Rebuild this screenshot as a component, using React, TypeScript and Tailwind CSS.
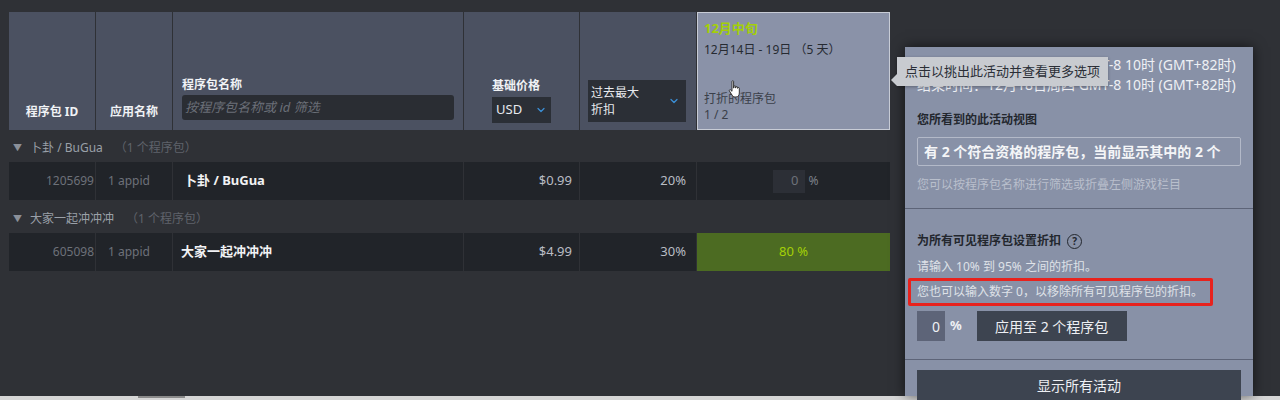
import { ChevronDown } from "lucide-react";

const font = { fontFamily: '"Noto Sans", "Noto Sans CJK SC", sans-serif' };

function GroupRow({ name, h }: { name: string; h: string }) {
  return (
    <div className={`col-span-6 ${h} flex items-center gap-2 pl-[4px] pt-[4px] text-[12px] text-[#9aa0a8]`}>
      <span className="text-[9px] text-[#8b9099]">▼</span>
      <span>{name}</span>
      <span className="text-[#5f636b] ml-1">（1 个程序包）</span>
    </div>
  );
}

export default function App() {
  return (
    <div style={font} className="w-[1280px] h-[400px] bg-[#2f3136] overflow-hidden relative">
      <div className="h-[396px] pt-[12px] pl-[9px]">
        <div className="grid grid-cols-[86px_76px_290px_115px_116px_193px] gap-x-px w-fit">
          {/* header */}
          <div className="h-[118px] bg-[#4b5161] flex items-end justify-center pb-[9px] text-[12px] font-bold text-[#f0f2f5]">程序包 ID</div>
          <div className="h-[118px] bg-[#4b5161] flex items-end justify-center pb-[9px] text-[12px] font-bold text-[#f0f2f5]">应用名称</div>
          <div className="h-[118px] bg-[#4b5161] flex flex-col justify-end px-[9px] pb-[10px]">
            <div className="text-[12px] font-bold text-[#f0f2f5] mb-[1px]">程序包名称</div>
            <div className="h-[25px] rounded-[3px] bg-[#2a2d33] flex items-center px-[3px] text-[13px] italic text-[#6a6f78]">按程序包名称或 id 筛选</div>
          </div>
          <div className="h-[118px] bg-[#4b5161] flex flex-col justify-end pl-[28px] pb-[7px]">
            <div className="text-[12px] font-bold text-[#f0f2f5] mb-[2px]">基础价格</div>
            <div className="w-[59px] h-[26px] bg-[#2b2f36] flex items-center justify-between px-[4px] text-[13px] text-[#e8eaee]">
              USD
              <ChevronDown size={12} strokeWidth={2.5} className="text-[#3b8fd6]" />
            </div>
          </div>
          <div className="h-[118px] bg-[#4b5161] flex items-end pl-[8px] pb-[8px]">
            <div className="w-[98px] h-[42px] bg-[#2b2f36] flex items-center justify-between pl-[3px] pr-[6px] text-[12px] leading-[17px] text-[#e8eaee]">
              <span>过去最大<br />折扣</span>
              <ChevronDown size={12} strokeWidth={2.5} className="text-[#3b8fd6]" />
            </div>
          </div>
          <div className="h-[118px] bg-[#8a92a8] border border-[#c8ccd6] px-[6px] pt-[6px] flex flex-col text-[#2a2e36] relative">
            <div className="text-[13px] font-bold text-[#a4d007]">12月中旬</div>
            <div className="text-[12px] mt-[2px] text-[#262a31]">12月14日 - 19日 （5 天）</div>
            <div className="mt-auto pb-[6px] text-[12px] leading-[16px] text-[#3a3f49]">
              打折的程序包<br />1 / 2
            </div>
            <svg className="absolute left-[30px] top-[66px]" width="16" height="20" viewBox="0 0 16 20">
              <path d="M4 2.5c0-1 1.6-1 1.6 0V9l.4-.2V7.5c0-1 1.6-1 1.6 0V9l.3-.1V8.3c0-1 1.6-1 1.6 0v1l.3-.1c0-.9 1.5-.9 1.5 0V14c0 2-1.3 4-3.3 4H7c-1.3 0-2.1-.7-2.8-1.7L1.4 12c-.6-.9.6-1.8 1.3-1L4 12.3Z" fill="#fff" stroke="#222" strokeWidth="0.9" />
            </svg>
          </div>

          <GroupRow name="卜卦 / BuGua" h="h-[32px]" />
          <div className="h-[38px] bg-[#212429] flex items-center justify-end pr-[1px] text-[12px] text-[#6d7179]">1205699</div>
          <div className="h-[38px] bg-[#212429] flex items-center pl-[12px] text-[12px] text-[#6d7179]">1 appid</div>
          <div className="h-[38px] bg-[#212429] flex items-center pl-[11px] text-[13px] font-bold text-[#f1f2f4]">卜卦 / BuGua</div>
          <div className="h-[38px] bg-[#212429] flex items-center justify-end pr-[7px] text-[13px] text-[#b9bdc4]">$0.99</div>
          <div className="h-[38px] bg-[#212429] flex items-center justify-end pr-[10px] text-[13px] text-[#b9bdc4]">20%</div>
          <div className="h-[38px] bg-[#212429] flex items-center justify-center gap-[4px] pl-[4px]">
            <div className="w-[32px] h-[23px] bg-[#2c2f36] flex items-center justify-end pr-[6px] text-[13px] text-[#6d7179]">0</div>
            <span className="text-[12px] text-[#7d828a]">%</span>
          </div>

          <GroupRow name="大家一起冲冲冲" h="h-[33px]" />
          <div className="h-[38px] bg-[#212429] flex items-center justify-end pr-[1px] text-[12px] text-[#6d7179]">605098</div>
          <div className="h-[38px] bg-[#212429] flex items-center pl-[12px] text-[12px] text-[#6d7179]">1 appid</div>
          <div className="h-[38px] bg-[#212429] flex items-center pl-[8px] text-[13px] font-bold text-[#f1f2f4]">大家一起冲冲冲</div>
          <div className="h-[38px] bg-[#212429] flex items-center justify-end pr-[7px] text-[13px] text-[#b9bdc4]">$4.99</div>
          <div className="h-[38px] bg-[#212429] flex items-center justify-end pr-[10px] text-[13px] text-[#b9bdc4]">30%</div>
          <div className="h-[38px] bg-[#4c6b22] flex items-center justify-center text-[13px] text-[#a4d007]">80 %</div>
        </div>
      </div>

      {/* scrollbar strip */}
      <div className="h-[4px] bg-[#d6d6d6] relative">
        <div className="absolute left-[138px] top-0 w-[47px] h-[2px] bg-[#8a8a8a]" />
      </div>

      {/* event popover */}
      <div className="absolute left-[905px] top-[47px] w-[348px] h-[349px] bg-[#8891a7] shadow-[0_0_12px_rgba(0,0,0,0.6)] text-[#2a2e36]">
        <div className="px-[12px] pt-[8px] text-[14px] leading-[20px] text-[#eef0f4] whitespace-nowrap">
          <div>开始时间：12月14日周日 GMT-8 10时 (GMT+82时)</div>
          <div>结束时间：12月18日周四 GMT-8 10时 (GMT+82时)</div>
        </div>
        <div className="px-[12px] pt-[16px] pb-[14px] border-b border-[#5d6478]">
          <div className="text-[12px] font-bold text-[#23272e]">您所看到的此活动视图</div>
          <div className="mt-[8px] h-[29px] border border-[#b3b9c8] rounded-[2px] flex items-center px-[6px] text-[14px] font-bold text-[#f4f5f7]">有 2 个符合资格的程序包，当前显示其中的 2 个</div>
          <div className="mt-[10px] text-[12px] text-[#b9bfcc]">您可以按程序包名称进行筛选或折叠左侧游戏栏目</div>
        </div>
        <div className="px-[12px] pt-[23px] pb-[18px] border-b border-[#5d6478]">
          <div className="flex items-center gap-[6px] text-[12px] font-bold text-[#23272e]">
            为所有可见程序包设置折扣
            <span className="w-[15px] h-[15px] rounded-full border-[1.5px] border-[#23272e] flex items-center justify-center text-[10px] leading-none">?</span>
          </div>
          <div className="mt-[8px] text-[12px] text-[#dfe2e8]">请输入 10% 到 95% 之间的折扣。</div>
          <div className="mt-[2px] -mx-[9px] border-[3px] border-[#e8221d] rounded-[2px] px-[6px] py-[2px] text-[12px] text-[#dfe2e8] w-[305px] whitespace-nowrap">您也可以输入数字 0，以移除所有可见程序包的折扣。</div>
          <div className="mt-[5px] flex items-center">
            <div className="w-[28px] h-[30px] bg-[#5d6478] flex items-center justify-end pr-[5px] text-[14px] text-[#eef0f4]">0</div>
            <span className="ml-[5px] text-[13px] font-bold text-[#eef0f4]">%</span>
            <div className="ml-[15px] w-[150px] h-[30px] bg-[#3d4450] flex items-center justify-center text-[14px] text-[#eef0f4]">应用至 2 个程序包</div>
          </div>
        </div>
        <div className="px-[12px] pt-[10px]">
          <div className="h-[30px] bg-[#3d4450] flex items-center justify-center text-[14px] text-[#eef0f4]">显示所有活动</div>
        </div>
      </div>

      {/* tooltip */}
      <div className="absolute left-[897px] top-[57px] h-[29px] px-[8px] bg-[#c8cbd0] flex items-center text-[13px] text-[#2a2e36] shadow-[0_1px_3px_rgba(0,0,0,0.3)]">
        点击以挑出此活动并查看更多选项
        <div className="absolute -left-[6px] top-[17px] w-0 h-0 border-y-[6px] border-y-transparent border-r-[6px] border-r-[#c8cbd0]" />
      </div>
    </div>
  );
}
